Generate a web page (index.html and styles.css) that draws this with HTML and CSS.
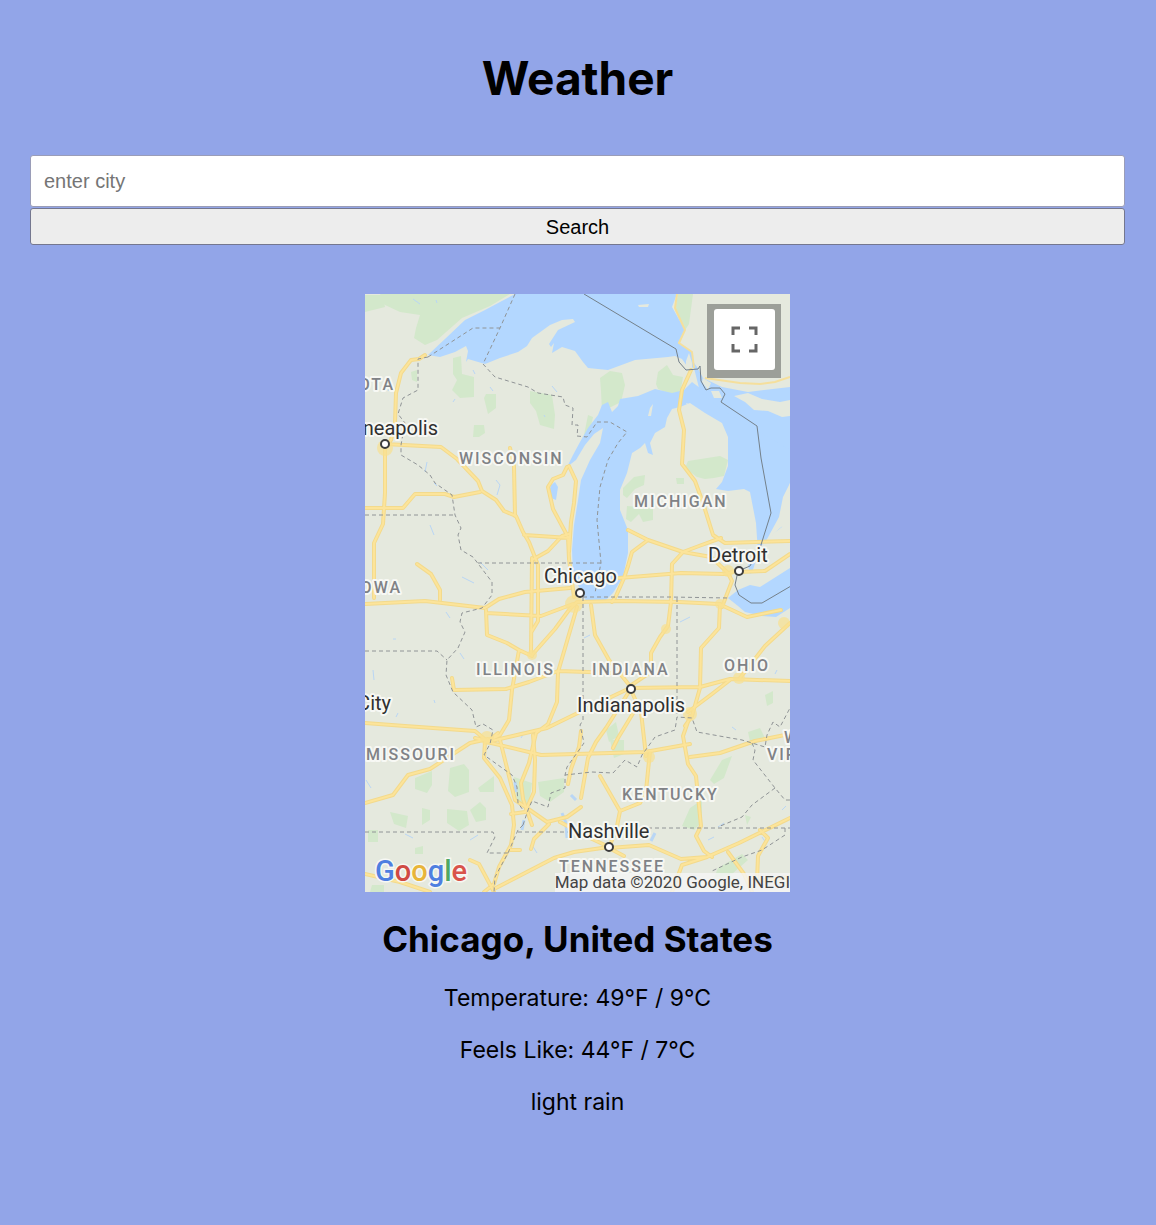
FILE: index.html
```html
<!DOCTYPE html>
<html lang="en">
<head>
<meta charset="utf-8">
<meta name="viewport" content="width=device-width, initial-scale=1">
<title>Weather</title>
<link rel="stylesheet" href="styles.css">
</head>
<body>
<main class="app">
  <h1 class="title">Weather</h1>
  <form class="search">
    <input class="search-input" type="text" placeholder="enter city" aria-label="City">
    <button class="search-button" type="button">Search</button>
  </form>
  <section class="result">
    <div class="map">
      <svg class="map-canvas" viewBox="365 294 425 598" role="img" aria-label="Map of Chicago and the Midwest">
        <rect class="land" x="365" y="294" width="425" height="598"/>
        <!-- forests -->
        <g class="forest">
          <path d="M380 294H510L490 306 462 318 437 340 425 345 414 338 416 328 420 315 400 312 385 305ZM365 295l18 0 2 12-12 3-8 2Z"/>
          <path d="M453 358l8-2 1 18 12 3v20l-14 1-8-8 5-10-4-6ZM486 394h10v14l-8 6-2-8-2-8ZM530 391l22 4 3 20-1 14-14-4-4-14-6-8ZM474 425h10l1 8-6 4h-6ZM411 372l6-2v12l-5-2Z"/>
          <path d="M600 378l10-7 12 2 3 12-4 17-10 5-9 4-1-20ZM656 384l2-12 9-7 6 10 10 2-3 18-8 0-14-6ZM678 294h15l-4 30-4 6-10-20ZM588 415l5 2-4 18h-5ZM688 461l32-5 8 4-4 16-10 2-9 1-8-2-12-9ZM623 488l11-11 11-2-1 10-9 4-8 9-4-3ZM627 506l26 2v12l-10 2-4-8-8 8-5-3ZM676 478h8v6h-7Z"/>
          <path d="M450 768l14-4 5 6v22l-14 5-7-6ZM415 778l17-7v14l-5 8-12-4ZM478 788l16-12v16h-14ZM514 777l18 6-3 22-12-2ZM538 782l26-4v14l-14 10-10-6ZM447 809l20 2 2 14-10 6-12-8ZM470 810l10-8 6 6v12l-10 2ZM390 812l18 4-2 12-12-4ZM422 808l8 2v10l-8 5ZM415 848l8-2v8h-8ZM368 830h10v12h-10ZM372 885h12v7h-14Z"/>
          <path d="M690 808l12-8v22l-8 8-12-4ZM710 780l12-20 10-4-8 22-10 6ZM765 695l8-4v12l-6 3ZM748 732l12-4 5 10-14 8ZM610 740h14v14l-10 4ZM718 868l24-14 6 6-16 14-18 4ZM606 730l10-8 3 14-10 6ZM745 815l6 2-4 8Z"/>
        </g>
        <!-- small rivers and ponds -->
        <g class="ponds">
          <path d="M413 299l7 5M436 300l1 3M388 391l2-4M473 370l2 4M490 387l3 4M455 399l-2 3M427 462l-2 10M496 480l4 5-3 10M430 525l4 10M462 577l12 6M446 612l4 6M393 639h3M460 653l4 6M434 700l1 3M398 713l-2 4M373 670l1 10M544 415l1 2M552 386l5 6M405 834l8 4M478 835l-8 5M366 780l5 8M584 638l6-3M680 622l10-5M732 727l4 3M777 670l-2 4M708 840l6-3M718 827l6-4M782 810l4-4M762 837l4 6M532 845l5 8M480 562l8 8M434 483l3 3M524 733l-3 5"/>
          <path class="wide" d="M562 813l4 10 1 15M524 820l-2 10M515 782l1 10M571 795l5 5M655 833l-4 8"/>
        </g>
        <!-- Superior, Michigan, Huron, Erie and St. Clair -->
        <g class="water">
          <path d="M428 355L446 338 465 320 485 310 500 302 515 294H677L672 307 685 330 678 343 692 352 694 368 687 366 682 359 675 356 668 357 635 360 608 370 588 368 583 362 575 351 562 347 552 353 554 343 551 347 549 344 558 330 575 322 573 319 562 320 550 325 532 338 527 346 518 352 500 358 485 364 468 359 466 362 468 351 466 346 455 352 440 357Z"/>
          <path d="M567 467L573 455 580 442 588 428 598 415 602 405 608 402 612 412 618 406 620 399 638 396 655 389 672 393 684 390 692 382 700 388 708 393 717 391 725 400 735 408 790 445V483L785 507 782 527 770 536 762 545 758 553 756 523 750 492 744 489 728 491 716 489 722 482 728 466 728 437 722 423 705 413 690 403 680 407 672 409 667 418 665 427 655 433 650 443 653 455 648 453 645 443 640 448 632 453 627 473 620 490 620 510 628 530 628 553 623 577 613 593 605 601 587 603 582 593 573 575 572 550 574 525 578 500 581 480 590 460 600 443 603 428 594 434 585 445 576 460Z"/>
          <path d="M692 360L697 367 703 378 722 387 748 392 790 387V450L722 410 700 392Z"/>
          <path d="M738 590l12-5 10 2 30-19v40l-14 9-14-1-17-4-7-6-10-8ZM748 565l6-6 5 4-3 10-6 2ZM551 485l4-3 3 5-2 13-5-2-2-6Z"/>
        </g>
        <!-- islands and peninsulas -->
        <g class="isle">
          <path d="M734 396l14-3 14 6 18 3 10-2v16l-8 1-14-6-14-1-9-8ZM638 305l11-1-1 3h-9ZM703 378l8 5-3 7-6-8ZM711 391l8 0 3 7-8 0ZM779 517l4-20 7-14v38l-10 7-14 13ZM736 578l16 4 16-5 22-15v-20l-30 5-8 26ZM650 408l3-4-2 12h-3ZM686 403l6 2-3 3ZM686 361l3-8 3 10 0 8-6-2Z"/>
          <path d="M736 295l6 1-3 4-5-2Z"/>
        </g>
        <!-- highways: pale core over a yellow casing -->
        <defs>
          <g id="roads">
            <path d="M425 355l-6 4-8 1-10 13-5 20-1 30-4 17-6 8v45l-2 31-9 19v55M365 508h38l12-14 30 0 9 3 26-5M385 444l56 3 16 12 21 22 4 10 14 9 8 11 12 5 7 16 6 10 9 23v56l-6 10M510 448l4 18 1 50M524 535l46 3M532 560l16-9 14-15 7-2M567 467l-4 8-10 4-5 8 5 22 15 28 1 22 5 38M569 466l7 15-2 22-3 19-2 30"/>
            <path d="M417 564l14 10 9 16v10M365 604l60-3 60 7 14-9 26-7 45-4M486 610l1 25 20 8 12 7 13 6M532 558l-1 95M486 613l55 3 32-12M532 655l23-26 14-19 8-8 42-1 60 1 40 2 28 13 34-7M519 650l-7 40-3 30-9 15-13 6-12-10-70-5-41-3M452 678l2 12 52-1 23-7 29-11 30 1 44 2M577 607l-19 65-1 30-9 22-12 9-7 30-8 20 2 16 9 26M487 742l60-14 41-20 42-20M487 742l54 13 104-3 45-8M475 738l13 3 10-8"/>
            <path d="M691 370l-9 20-3 20 5 20-2 34 13 17 8 22 10 32 12 8 65-2M628 530l20 10 35 12 16-6 22-8M648 540l-16 12-4 14-4 12-8 18-4 6M683 552l-11 12-1 38-3 24-8 11-9 16v8M619 578l62-5 44 1 14-4M683 552l28 5 17 16 4 8-10 26M739 572l26-1 25-17M720 604l-1 24-18 20-1 40-8 28-7 10M630 688l70-1 30-8 60 2M740 678l25-32 25-23M730 680l-18 14-24 18M591 605l4 30 14 25 21 26 18-12M630 688l11 24 5 44M630 690l-24 38-10 14-8 16-7 40M690 716l-7 20 5 28 8 12 5 50-5 10 8 15 8 6M365 803l28-8 15-20 22-6 40-26 18-4"/>
            <path d="M485 742l-1 16 16 20 12 27 2 20-3 20-12 22-5 17-10 8M500 740l15 60 12 8 20 14 20-5 14-10M533 735l2 25-1 32-9 20-14 2M549 824l-15 15-3 10M560 822l28 15 21 10M609 848l40-3 32 14 26-2 32-14 51-25M600 776l20 35-4 20-7 16-35 5-20 6-60 31M620 811l20-8 6-12 4-40M690 757l30-4 35-12 35-7M609 848l15 8M707 857l-25 8-10 27M728 852l16 22 8 18M760 830l8 8-10 18-1 25 33-4M494 892l-15-28-9-4M510 850h10M635 710l-17 28-5 10M581 731l-2 16-8 22-3 15M365 874l35 8 30 10"/>
          </g>
        </defs>
        <use href="#roads" class="road-casing"/>
        <use href="#roads" class="road"/>
        <g class="junctions">
          <circle cx="385" cy="448" r="8"/><circle cx="574" cy="604" r="9"/><circle cx="487" cy="738" r="7"/><circle cx="690" cy="714" r="7"/><circle cx="649" cy="757" r="6"/><circle cx="739" cy="678" r="6"/><circle cx="666" cy="629" r="5"/><circle cx="720" cy="604" r="5"/><circle cx="784" cy="623" r="6"/><circle cx="532" cy="655" r="5"/><circle cx="728" cy="571" r="6"/>
        </g>
        <path class="minor-road" d="M677 294L675 308 685 330 679 343 692 352 694 368M705 378L740 383 760 384 775 382 790 377"/>
        <!-- state borders -->
        <g class="state-line">
          <path d="M515 294L500 328 483 364 495 377 528 387 538 393 563 397 565 405 573 408 572 425 578 425 577 436 587 437 597 422 610 422 627 432 618 443 608 460 600 487 597 520 601 563 595 593M428 357L473 328H500"/>
          <path d="M428 357L418 359V390L403 398 398 414 405 423 401 445 401 455 418 465 430 475 435 483 452 495 455 515 461 528 458 535 461 550 473 557 492 582 492 595 482 608 462 613 460 622 465 632 458 648 447 660 446 675 453 692 472 710 476 727 483 724 493 730 490 744 484 755 512 775 517 787 518 803 523 810M523 825L518 830 508 853 495 877 494 892"/>
          <path d="M365 515H455M478 563H601M365 651H437L447 660M583 597V720L580 725 584 743 567 767 565 775M583 597H670L728 598M677 598V717"/>
          <path d="M523 825L528 810 532 801 548 807 551 793 565 788V775L592 772 613 773 625 760 637 767 642 755 655 737 675 730 677 717 692 718 697 732 725 737 742 740 752 743 765 747 767 735 773 722 780 727 790 708"/>
          <path d="M752 743L755 750 753 760 775 788 785 800H790M775 788L752 805 742 817 718 827M365 832H493L495 837 487 853H508M518 832H568M648 828H790M785 828V835L762 850 742 857 712 871"/>
        </g>
        <path class="country-line" d="M584 294l92 55 3 13 7 8 12-1 2-3 1 15 5 9 5-2 9 0 5 6-4 8 36 24 4 32 10 55-11 35-10 18-12 5-3 14 4 10 12 8h11l29-17"/>
        <g class="city-dots">
          <circle cx="385" cy="444" r="4"/><circle cx="580" cy="593" r="4"/><circle cx="739" cy="571" r="4"/><circle cx="631" cy="689" r="4"/><circle cx="609" cy="847" r="4"/>
        </g>
        <g class="state-label">
          <text x="395" y="390" text-anchor="end">SOTA</text>
          <text x="459" y="464">WISCONSIN</text>
          <text x="634" y="507">MICHIGAN</text>
          <text x="402" y="593" text-anchor="end">IOWA</text>
          <text x="476" y="675">ILLINOIS</text>
          <text x="592" y="675">INDIANA</text>
          <text x="724" y="671">OHIO</text>
          <text x="366" y="760">MISSOURI</text>
          <text x="622" y="800">KENTUCKY</text>
          <text x="559" y="872">TENNESSEE</text>
          <text x="784" y="743">WEST</text>
          <text x="767" y="760">VIRGINIA</text>
        </g>
        <g class="city-label">
          <text x="438" y="435" text-anchor="end">Minneapolis</text>
          <text x="544" y="583">Chicago</text>
          <text x="708" y="562">Detroit</text>
          <text x="577" y="712">Indianapolis</text>
          <text x="391" y="710" text-anchor="end">Kansas City</text>
          <text x="568" y="838">Nashville</text>
        </g>
        <text class="logo" x="375" y="881"><tspan fill="#4f7fe0">G</tspan><tspan fill="#d04a43">o</tspan><tspan fill="#e8b53a">o</tspan><tspan fill="#4f7fe0">g</tspan><tspan fill="#4fa863">l</tspan><tspan fill="#d9534a">e</tspan></text>
      </svg>
      <button class="fullscreen" type="button" aria-label="Toggle fullscreen view">
        <svg class="fullscreen-icon" viewBox="0 0 61 61" aria-hidden="true"><path d="M19 26V19H26M35 19H42V26M42 35V42H35M26 42H19V35"/></svg>
      </button>
      <div class="attribution">Map data ©2020 Google, INEGI</div>
    </div>
    <h2 class="place">Chicago, United States</h2>
    <p class="reading">Temperature: 49°F / 9°C</p>
    <p class="reading">Feels Like: 44°F / 7°C</p>
    <p class="reading">light rain</p>
  </section>
</main>
</body>
</html>
```
FILE: styles.css
```css
* { box-sizing: border-box; }
body {
  margin: 0;
  background: #92a5e8;
  color: #000;
  font-family: Inter, "Liberation Sans", sans-serif;
}
.app {
  padding: 48px 31px 48px 30px;
  text-align: center;
}
.title {
  margin: 0 0 47px;
  font-size: 46px;
  line-height: 60px;
  font-weight: 700;
}
.search {
  display: flex;
  flex-direction: column;
  gap: 1px;
}
.search-input,
.search-button {
  width: 100%;
  margin: 0;
  border-radius: 3px;
  font-family: "Liberation Sans", Arial, sans-serif;
  font-size: 20px;
  color: #000;
}
.search-input {
  height: 52px;
  padding: 0 13px;
  border: 1px solid #9a9db8;
  background: #fff;
}
.search-input::placeholder { color: #757575; opacity: 1; }
.search-button {
  height: 37px;
  padding: 2px 0 0;
  border: 1px solid #74778f;
  background: #ededed;
}
.result {
  display: flex;
  flex-direction: column;
  align-items: center;
  padding-top: 49px;
}
.map {
  position: relative;
  width: 100%;
  max-width: 425px;
  overflow: hidden;
}
.map-canvas { display: block; width: 100%; overflow: hidden; }
.land { fill: #e5e9de; }
.forest { fill: #d3e8cb; }
.water { fill: #b3d7ff; }
.isle { fill: #e5e9de; }
.ponds { fill: none; stroke: #b9d6f5; stroke-width: 1; }
.ponds .wide { stroke-width: 3; }
.road-casing, .road {
  fill: none;
  stroke-linejoin: round;
  stroke-linecap: round;
}
.road-casing { stroke: #f3da8c; stroke-width: 4; }
.road { stroke: #fce49a; stroke-width: 2; }
.minor-road { fill: none; stroke: #f5df9c; stroke-width: 2; }
.junctions { fill: #f8df90; fill-opacity: .7; }
.state-line { fill: none; stroke: #909496; stroke-width: 1; stroke-dasharray: 4 3; }
.country-line { fill: none; stroke: #74808a; stroke-width: 1; }
.city-dots { fill: #fff; stroke: #3c3c3c; stroke-width: 2; }
.state-label, .city-label {
  font-family: Roboto, sans-serif;
  font-weight: 500;
  paint-order: stroke;
  stroke: #f7f8f4;
  stroke-width: 4;
  stroke-linejoin: round;
}
.state-label { font-size: 16px; letter-spacing: 2px; fill: #808286; }
.city-label { font-size: 20px; font-weight: 400; fill: #303030; }
.logo {
  font-family: Roboto, sans-serif;
  font-size: 29px;
  font-weight: 500;
  paint-order: stroke;
  stroke: #f7f8f4;
  stroke-width: 3;
}
.fullscreen {
  position: absolute;
  top: 10px;
  right: 9px;
  width: 74px;
  height: 74px;
  padding: 5px 6px 8px 7px;
  border: 0;
  background: #9c9f99;
}
.fullscreen-icon {
  display: block;
  width: 61px;
  height: 61px;
  border-radius: 3px;
  background: #fff;
}
.fullscreen path { fill: none; stroke: #666; stroke-width: 3; }
.attribution {
  position: absolute;
  right: 0;
  bottom: 0;
  background: rgba(245, 245, 245, .8);
  color: #444;
  font-family: Roboto, sans-serif;
  font-size: 17px;
  line-height: 19px;
  white-space: nowrap;
}
.place {
  margin: 24px 0 21px;
  font-size: 35px;
  line-height: 46px;
  font-weight: 700;
}
.reading {
  margin: 0 0 22px;
  font-size: 23px;
  line-height: 30px;
}
```
